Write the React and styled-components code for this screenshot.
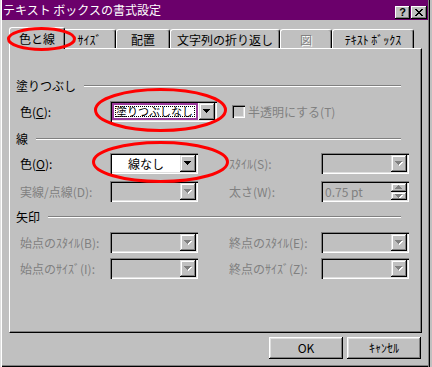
import React from 'react'
import styled, { createGlobalStyle } from 'styled-components'

const GlobalStyle = createGlobalStyle`
  html, body {
    margin: 0;
    padding: 0;
    background: #c0c0c0;
  }
  body {
    font-family: "Noto Sans CJK JP", "Liberation Sans", sans-serif;
    font-size: 12px;
  }
`

const Window = styled.div`
  position: relative;
  box-sizing: border-box;
  width: 430px;
  height: 367px;
  padding: 0 2px;
  background: #c0c0c0;
  box-shadow: inset 1px 0 #dfdfdf, inset 2px 0 #fff, inset -1px 0 #000,
    inset -2px 0 #808080, inset 0 -1px #000, inset 0 -2px #808080;
`

const TitleBar = styled.div`
  display: flex;
  align-items: center;
  height: 20px;
  padding: 0 1px;
  background: #6b006b;
  color: #fff;
`

const Title = styled.span`
  flex: 1;
  font-size: 12px;
  line-height: 14px;
  white-space: nowrap;
  margin-top: -1px;
`

const CapButton = styled.div`
  box-sizing: border-box;
  width: ${({ $w }) => $w}px;
  height: 13px;
  margin: 4px 0 0 ${({ $gap }) => $gap}px;
  display: flex;
  align-items: center;
  justify-content: center;
  background: #c0c0c0;
  color: #000;
  font: bold 11px "Liberation Sans", sans-serif;
  box-shadow: inset -1px -1px #000, inset 1px 1px #fff, inset -2px -2px #808080;
`

const Body = styled.div`
  padding: 0 6px 0 7px;
`

const TabStrip = styled.div`
  display: flex;
  align-items: flex-end;
  height: 21px;
  margin-top: 7px;
  padding-left: 2px;
`

const Tab = styled.div`
  position: relative;
  z-index: ${({ $active }) => ($active ? 2 : 1)};
  box-sizing: border-box;
  width: ${({ $w }) => $w}px;
  height: ${({ $active }) => ($active ? 22 : 19)}px;
  margin: 0 ${({ $active }) => ($active ? -2 : 0)}px ${({ $active }) => ($active ? -1 : 0)}px;
  display: flex;
  align-items: center;
  justify-content: center;
  padding-top: 1px;
  background: #c0c0c0;
  border-top: 1px solid #fff;
  border-left: 1px solid #fff;
  border-right: 1px solid #000;
  border-radius: 3px 3px 0 0;
  box-shadow: inset -1px 0 #808080;
  color: ${({ $disabled }) => ($disabled ? '#808080' : '#000')};
  text-shadow: ${({ $disabled }) => ($disabled ? '1px 1px #fff' : 'none')};
  line-height: 14px;
  white-space: nowrap;
`

const Panel = styled.div`
  box-sizing: border-box;
  height: 285px;
  padding: 30px 20px 0 6px;
  border-top: 1px solid #fff;
  border-left: 1px solid #fff;
  border-right: 1px solid #000;
  border-bottom: 1px solid #000;
  box-shadow: inset -1px -1px #808080;
`

const Header = styled.div`
  display: flex;
  align-items: center;
  height: 14px;
  line-height: 14px;
  margin-top: ${({ $top }) => $top}px;
`

const Rule = styled.div`
  flex: 1;
  height: 0;
  margin-left: 8px;
  border-top: 1px solid #808080;
  border-bottom: 1px solid #fff;
`

const Row = styled.div`
  display: flex;
  align-items: center;
  height: 21px;
  padding-left: 4px;
  margin-top: ${({ $top }) => $top}px;
`

const Label = styled.span`
  flex: none;
  width: ${({ $w }) => $w}px;
  margin-left: ${({ $left }) => $left || 0}px;
  line-height: 14px;
  white-space: nowrap;
  color: ${({ $disabled }) => ($disabled ? '#808080' : '#000')};
`

const Key = styled.span`
  text-decoration: underline;
`

const Combo = styled.div`
  flex: none;
  box-sizing: border-box;
  width: ${({ $w }) => $w}px;
  height: 21px;
  padding: 2px;
  display: flex;
  background: ${({ $disabled }) => ($disabled ? '#c0c0c0' : '#fff')};
  box-shadow: inset 1px 1px #808080, inset 2px 2px #000,
    inset -1px -1px #fff, inset -2px -2px #dfdfdf;
`

const Field = styled.div`
  flex: 1;
  display: flex;
  align-items: center;
  justify-content: ${({ $center }) => ($center ? 'center' : 'flex-start')};
  padding-left: ${({ $center }) => ($center ? 0 : 2)}px;
  overflow: hidden;
  white-space: nowrap;
  line-height: 14px;
  color: ${({ $disabled }) => ($disabled ? '#808080' : '#000')};
`

const FocusField = styled.div`
  flex: 1;
  box-sizing: border-box;
  margin-right: 1px;
  padding: 1px;
  border: 2px solid #9a3a9a;
  background: #fff;
  display: flex;
  overflow: hidden;
`

const FocusText = styled.span`
  flex: 1;
  display: flex;
  align-items: center;
  padding-left: 1px;
  outline: 1px dotted #000;
  outline-offset: -1px;
  white-space: nowrap;
  font-size: 11px;
  line-height: 11px;
`

const DropButton = styled.div`
  flex: none;
  width: 16px;
  display: flex;
  align-items: center;
  justify-content: center;
  background: #c0c0c0;
  box-shadow: inset -1px -1px #000, inset 1px 1px #dfdfdf,
    inset -2px -2px #808080, inset 2px 2px #fff;
`

const SpinStack = styled.div`
  flex: none;
  width: 16px;
  display: flex;
  flex-direction: column;
`

const SpinButton = styled(DropButton)`
  flex: 1;
  width: 16px;
`

const Check = styled.div`
  flex: none;
  box-sizing: border-box;
  width: 13px;
  height: 13px;
  margin: 0 3px 0 15px;
  background: #c0c0c0;
  box-shadow: inset 1px 1px #808080, inset 2px 2px #000,
    inset -1px -1px #fff, inset -2px -2px #dfdfdf;
`

const Footer = styled.div`
  display: flex;
  justify-content: flex-end;
  gap: 4px;
  margin-top: 4px;
  padding-right: 1px;
`

const Button = styled.button`
  box-sizing: border-box;
  width: 74px;
  height: 22px;
  padding: 0;
  border: 0;
  background: #c0c0c0;
  color: #000;
  font: 12px "Noto Sans CJK JP", "Liberation Sans", sans-serif;
  line-height: 14px;
  box-shadow: inset -1px -1px #000, inset 1px 1px #fff,
    inset -2px -2px #808080, inset 2px 2px #dfdfdf;
`

const Marks = styled.svg`
  position: absolute;
  top: 0;
  left: 0;
  z-index: 5;
  pointer-events: none;
`

function Arrow({ disabled, up }) {
  const pts = up ? '0,4 7,4 3.5,0' : '0,0 7,0 3.5,4'
  const small = up !== undefined
  return (
    <svg width="8" height={small ? 4 : 5} viewBox={small ? '0 0 8 4' : '0 0 8 5'} shapeRendering="crispEdges">
      {disabled && <polygon points={up ? '1,5 8,5 4.5,1' : '1,1 8,1 4.5,5'} fill="#fff" />}
      <polygon points={pts} fill={disabled ? '#808080' : '#000'} />
    </svg>
  )
}

function Select({ w, disabled, value, center }) {
  return (
    <Combo $w={w} $disabled={disabled}>
      <Field $center={center} $disabled={disabled}>{value}</Field>
      <DropButton>
        <Arrow disabled={disabled} />
      </DropButton>
    </Combo>
  )
}

const tabs = [
  { label: '色と線', w: 56, active: true },
  { label: 'ｻｲｽﾞ', w: 53 },
  { label: '配置', w: 54 },
  { label: '文字列の折り返し', w: 110 },
  { label: '図', w: 52, disabled: true },
  { label: 'ﾃｷｽﾄ ﾎﾞｯｸｽ', w: 82 },
]

export default function App() {
  return (
    <>
      <GlobalStyle />
      <Window>
        <TitleBar>
          <Title>テキスト ボックスの書式設定</Title>
          <CapButton $w={15} $gap={0}>?</CapButton>
          <CapButton $w={16} $gap={1}>
            <svg width="8" height="7" viewBox="0 0 8 7" shapeRendering="crispEdges">
              <path d="M0 0h2l2 2.5L6 0h2L5 3.5 8 7H6L4 4.5 2 7H0l3-3.5z" fill="#000" />
            </svg>
          </CapButton>
        </TitleBar>

        <Body>
          <TabStrip>
            {tabs.map((t) => (
              <Tab key={t.label} $w={t.w} $active={t.active} $disabled={t.disabled}>
                {t.label}
              </Tab>
            ))}
          </TabStrip>

          <Panel>
            <Header $top={0}>
              塗りつぶし<Rule />
            </Header>
            <Row $top={8}>
              <Label $w={90}>色(<Key>C</Key>):</Label>
              <Combo $w={107}>
                <FocusField>
                  <FocusText>塗りつぶしなし</FocusText>
                </FocusField>
                <DropButton>
                  <Arrow />
                </DropButton>
              </Combo>
              <Check />
              <Label $disabled>半透明にする(T)</Label>
            </Row>

            <Header $top={10}>
              線<Rule />
            </Header>
            <Row $top={7}>
              <Label $w={90}>色(<Key>O</Key>):</Label>
              <Select w={88} value="線なし" center />
              <Label $w={92} $left={31} $disabled>ｽﾀｲﾙ(S):</Label>
              <Select w={88} disabled />
            </Row>
            <Row $top={7}>
              <Label $w={90} $disabled>実線/点線(D):</Label>
              <Select w={88} disabled />
              <Label $w={92} $left={31} $disabled>太さ(W):</Label>
              <Combo $w={88} $disabled>
                <Field $disabled>0.75 pt</Field>
                <SpinStack>
                  <SpinButton>
                    <Arrow disabled up />
                  </SpinButton>
                  <SpinButton>
                    <Arrow disabled up={false} />
                  </SpinButton>
                </SpinStack>
              </Combo>
            </Row>

            <Header $top={8}>
              矢印<Rule />
            </Header>
            <Row $top={8}>
              <Label $w={90} $disabled>始点のｽﾀｲﾙ(B):</Label>
              <Select w={88} disabled />
              <Label $w={92} $left={31} $disabled>終点のｽﾀｲﾙ(E):</Label>
              <Select w={88} disabled />
            </Row>
            <Row $top={5}>
              <Label $w={90} $disabled>始点のｻｲｽﾞ(I):</Label>
              <Select w={88} disabled />
              <Label $w={92} $left={31} $disabled>終点のｻｲｽﾞ(Z):</Label>
              <Select w={88} disabled />
            </Row>
          </Panel>

          <Footer>
            <Button>OK</Button>
            <Button>ｷｬﾝｾﾙ</Button>
          </Footer>
        </Body>

        <Marks width="432" height="367" viewBox="0 0 432 367">
          <g fill="none" stroke="#f00" strokeWidth="3">
            <ellipse cx="41.5" cy="39" rx="33" ry="10.5" />
            <ellipse cx="160.5" cy="110" rx="65" ry="20.5" />
            <ellipse cx="160.5" cy="162" rx="67" ry="19.5" />
          </g>
        </Marks>
      </Window>
    </>
  )
}
